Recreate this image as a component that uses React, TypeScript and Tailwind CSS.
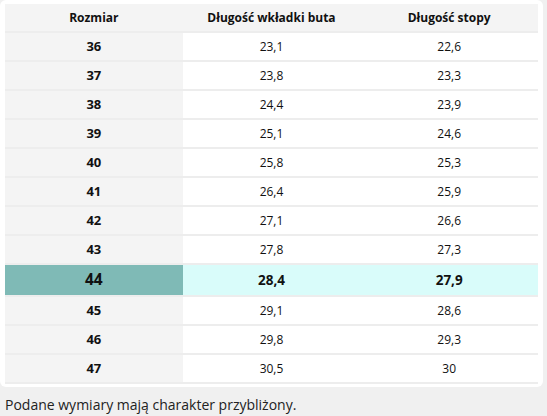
import React from 'react';

type Row = { size: string; insole: string; foot: string; active?: boolean };

const rows: Row[] = [
    { size: '36', insole: '23,1', foot: '22,6' },
    { size: '37', insole: '23,8', foot: '23,3' },
    { size: '38', insole: '24,4', foot: '23,9' },
    { size: '39', insole: '25,1', foot: '24,6' },
    { size: '40', insole: '25,8', foot: '25,3' },
    { size: '41', insole: '26,4', foot: '25,9' },
    { size: '42', insole: '27,1', foot: '26,6' },
    { size: '43', insole: '27,8', foot: '27,3' },
    { size: '44', insole: '28,4', foot: '27,9', active: true },
    { size: '45', insole: '29,1', foot: '28,6' },
    { size: '46', insole: '29,8', foot: '29,3' },
    { size: '47', insole: '30,5', foot: '30' },
];

const SizeRow: React.FC<{ row: Row }> = ({ row }) => {
    if (row.active) {
        return (
            <div className="grid grid-cols-3 h-[32px] border-b-2 border-[#ededed]">
                <div className="flex items-center justify-center bg-[#7fbab6] text-[15.5px] font-bold">
                    {row.size}
                </div>
                <div className="flex items-center justify-center bg-[#d9fcfa] text-[13.5px] font-bold">
                    {row.insole}
                </div>
                <div className="flex items-center justify-center bg-[#d9fcfa] text-[13.5px] font-bold">
                    {row.foot}
                </div>
            </div>
        );
    }
    return (
        <div className="grid grid-cols-3 h-[29px] border-b-2 border-[#ededed]">
            <div className="flex items-center justify-center bg-[#f4f4f4] text-[13px] font-bold">
                {row.size}
            </div>
            <div className="flex items-center justify-center bg-white text-[12px]">
                {row.insole}
            </div>
            <div className="flex items-center justify-center bg-white text-[12px]">
                {row.foot}
            </div>
        </div>
    );
};

export default function App() {
    return (
        <div
            className="w-full h-screen bg-[#f0f0f0] text-[#111]"
            style={{ fontFamily: '"Open Sans", "Noto Sans", sans-serif' }}
        >
            <div className="w-[543px] bg-white rounded-md pt-[4px] pb-[3px] px-[5px]">
                <div className="grid grid-cols-3 h-[29px] bg-[#f4f4f4] border-b-2 border-[#ededed] text-[12px] font-bold">
                    <div className="flex items-center justify-center">Rozmiar</div>
                    <div className="flex items-center justify-center">Długość wkładki buta</div>
                    <div className="flex items-center justify-center">Długość stopy</div>
                </div>
                {rows.map((row) => (
                    <SizeRow key={row.size} row={row} />
                ))}
            </div>
            <p className="px-[5px] pt-[7px] text-[14px] text-[#222]">
                Podane wymiary mają charakter przybliżony.
            </p>
        </div>
    );
}
